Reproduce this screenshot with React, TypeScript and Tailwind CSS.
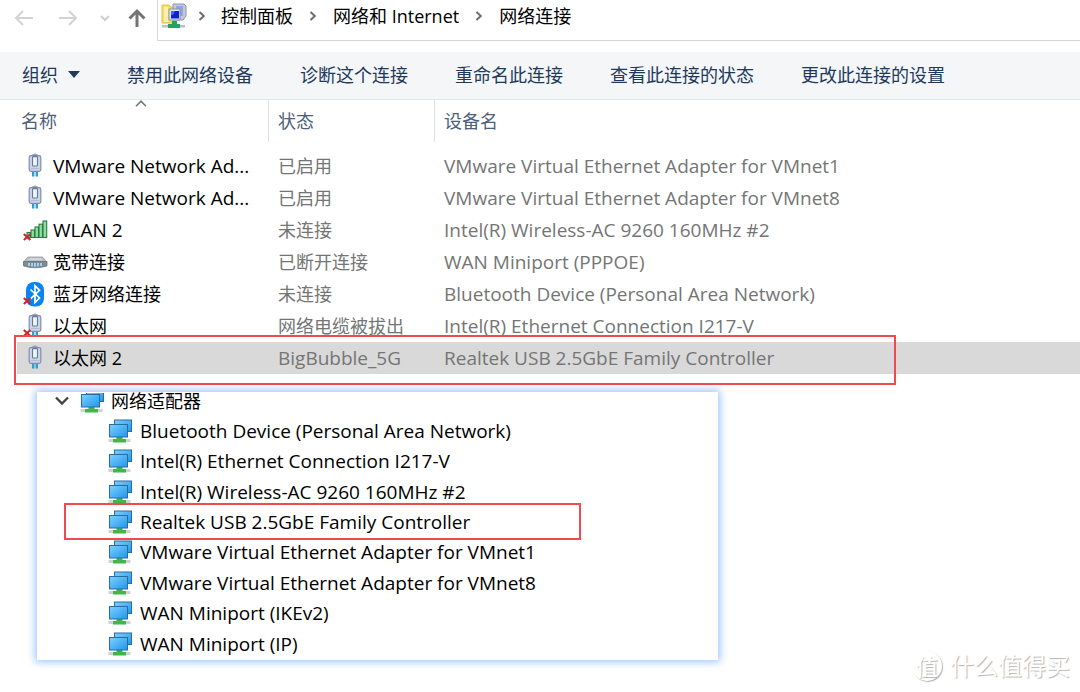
import { Fragment } from "react";
import type { ReactNode } from "react";

type IconKind = "plug" | "wifi" | "modem" | "bluetooth";

interface Connection {
  name: string;
  status: string;
  device: string;
  icon: IconKind;
  disconnected?: boolean;
  selected?: boolean;
}

const crumbs = ["控制面板", "网络和 Internet", "网络连接"];

const commands = ["禁用此网络设备", "诊断这个连接", "重命名此连接", "查看此连接的状态", "更改此连接的设置"];

const connections: Connection[] = [
  { name: "VMware Network Ad...", status: "已启用", device: "VMware Virtual Ethernet Adapter for VMnet1", icon: "plug" },
  { name: "VMware Network Ad...", status: "已启用", device: "VMware Virtual Ethernet Adapter for VMnet8", icon: "plug" },
  { name: "WLAN 2", status: "未连接", device: "Intel(R) Wireless-AC 9260 160MHz #2", icon: "wifi", disconnected: true },
  { name: "宽带连接", status: "已断开连接", device: "WAN Miniport (PPPOE)", icon: "modem" },
  { name: "蓝牙网络连接", status: "未连接", device: "Bluetooth Device (Personal Area Network)", icon: "bluetooth", disconnected: true },
  { name: "以太网", status: "网络电缆被拔出", device: "Intel(R) Ethernet Connection I217-V", icon: "plug", disconnected: true },
  { name: "以太网 2", status: "BigBubble_5G", device: "Realtek USB 2.5GbE Family Controller", icon: "plug", selected: true },
];

const adapters = [
  "Bluetooth Device (Personal Area Network)",
  "Intel(R) Ethernet Connection I217-V",
  "Intel(R) Wireless-AC 9260 160MHz #2",
  "Realtek USB 2.5GbE Family Controller",
  "VMware Virtual Ethernet Adapter for VMnet1",
  "VMware Virtual Ethernet Adapter for VMnet8",
  "WAN Miniport (IKEv2)",
  "WAN Miniport (IP)",
];

const highlighted = "Realtek USB 2.5GbE Family Controller";

// Latin labels run one size larger than the Chinese ones
const labelSize = (label: string) => (/^[A-Z]/.test(label) ? "text-[19px]" : "text-[18px]");

function Chevron({ className }: { className?: string }) {
  return (
    <svg viewBox="0 0 8 10" className={`w-2 h-2.5 shrink-0 ${className ?? ""}`} fill="none" stroke="#6e6e6e" strokeWidth="2">
      <path d="M1.5 1 L5.8 5 L1.5 9" />
    </svg>
  );
}

function Arrow({ d, color, width = 2 }: { d: string; color: string; width?: number }) {
  return (
    <svg viewBox="0 0 20 20" className="w-5 h-5" fill="none" stroke={color} strokeWidth={width}>
      <path d={d} />
    </svg>
  );
}

function FolderIcon() {
  return (
    <svg viewBox="0 0 26 26" className="w-[26px] h-[26px] shrink-0">
      <path d="M1 2 H8 L10 4 H13 V20 H1 Z" fill="#f6dc72" stroke="#e0bc48" />
      <path d="M3 4 H7 V19 H3 Z" fill="#fdf0a8" />
      <path d="M12 1 H23 L25 3 V13 L22 17 H12 Z" fill="#c3c9d6" stroke="#8f98ab" />
      <path d="M15 3 H22 V13 H15 Z" fill="#8ea5e8" />
      <path d="M8 6 H19 V17 H8 Z" fill="#dfe5f2" stroke="#8691b0" />
      <path d="M10 8 H18 V15.5 H10 Z" fill="#1120cf" />
      <path d="M10 8 H14 L12 12 H10 Z" fill="#4b68f2" />
      <path d="M1 22 H24 V24.5 H1 Z" fill="#b9c1c4" />
      <path d="M11 18 H16 V21 H19 V25 H7 V21 H11 Z" fill="#1fa562" />
    </svg>
  );
}

function PlugArt() {
  return (
    <g>
      <path d="M10.2 18 V23.5 M13.8 18 V23.5" stroke="#2b9fd4" strokeWidth="2.4" />
      <path d="M8.5 3 Q12 -0.5 15.5 3" fill="#dbe3ee" stroke="#96a3b8" strokeWidth="1.2" />
      <rect x="6.2" y="2.6" width="11.6" height="15.8" rx="1.8" fill="#cbd6e8" stroke="#8090aa" strokeWidth="1.2" />
      <rect x="9.5" y="3.6" width="5" height="9.4" rx="0.8" fill="#eef3fa" stroke="#6b7a94" strokeWidth="1.1" />
      <path d="M7.5 15.6 H16.5" stroke="#aebcd2" />
    </g>
  );
}

function WifiArt() {
  return (
    <g fill="#8fdc9c" stroke="#2d7a48" strokeWidth="1.1">
      <rect x="4" y="15.5" width="3.5" height="5" />
      <rect x="8" y="13" width="3.5" height="7.5" />
      <rect x="12" y="10" width="3.5" height="10.5" />
      <rect x="16" y="7.2" width="3.5" height="13.3" />
      <rect x="20" y="4" width="3.7" height="16.5" />
    </g>
  );
}

function ModemArt() {
  return (
    <g>
      <path d="M5 8 H19.5 L24 13 H0.5 Z" fill="#b9bfc5" stroke="#929aa2" strokeWidth="0.8" />
      <path d="M7 9.3 H18 L19.3 11 H5.5 Z" fill="#d5dade" />
      <path d="M0.5 12.5 H24 V17 Q12 20.5 0.5 17 Z" fill="#7f8b94" stroke="#68737d" strokeWidth="0.8" />
      <path d="M6 14 V17 M9 14 V17.5 M12 14 V17.7 M15 14 V17.5 M18 14 V17" stroke="#a5e0fa" strokeWidth="1.7" />
    </g>
  );
}

function BluetoothArt() {
  return (
    <g>
      <rect x="3" y="1" width="18" height="24.5" rx="8" fill="#0a84f0" />
      <path d="M7.5 8.5 L16.5 17 L12 21.5 V4.8 L16.5 9.2 L7.5 17.8" fill="none" stroke="#fff" strokeWidth="1.7" />
    </g>
  );
}

const iconArt: Record<IconKind, ReactNode> = {
  plug: <PlugArt />,
  wifi: <WifiArt />,
  modem: <ModemArt />,
  bluetooth: <BluetoothArt />,
};

function ConnectionIcon({ kind, disconnected }: { kind: IconKind; disconnected?: boolean }) {
  return (
    <svg viewBox="0 0 25 27" className="w-[25px] h-[27px] shrink-0">
      {iconArt[kind]}
      {disconnected && <path d="M0.8 17 L7.4 23 M7.4 17 L0.8 23" stroke="#c9262c" strokeWidth="2" />}
    </svg>
  );
}

function AdapterIcon() {
  return (
    <svg viewBox="0 0 24 24" className="w-6 h-6 shrink-0">
      <defs>
        <linearGradient id="screen" x1="0" y1="0" x2="1" y2="1">
          <stop offset="0" stopColor="#7fd0fd" />
          <stop offset="1" stopColor="#1d97ee" />
        </linearGradient>
      </defs>
      <path d="M0.5 20 H22.5 V23 H0.5 Z" fill="#d2d2d2" />
      <path d="M8.5 18 H14.5 V20 H18 V23.5 H5 V20 H8.5 Z" fill="#43b649" />
      <rect x="6.5" y="1" width="17" height="11.5" fill="url(#screen)" stroke="#2a6c9c" />
      <rect x="1.5" y="5.5" width="18" height="12.5" fill="url(#screen)" stroke="#2a6c9c" />
    </svg>
  );
}

function AddressRow() {
  return (
    <div className="flex h-13">
      <div className="flex w-[157px] h-9 shrink-0 items-center pl-3.5">
        <button aria-label="后退" className="mr-6"><Arrow color="#d3d3d3" d="M19 10 H2 M9 3 L2 10 L9 17" /></button>
        <button aria-label="前进" className="mr-5"><Arrow color="#d3d3d3" d="M1 10 H18 M11 3 L18 10 L11 17" /></button>
        <button aria-label="最近的位置" className="mr-[15px]">
          <svg viewBox="0 0 14 10" className="w-3.5 h-2.5" fill="none" stroke="#cfcfcf" strokeWidth="2"><path d="M3 3 L7 7 L11 3" /></svg>
        </button>
        <button aria-label="上移"><Arrow color="#757575" width={3} d="M10 19 V3 M2.5 10.5 L10 3 L17.5 10.5" /></button>
      </div>
      <nav className="flex flex-1 h-[41px] items-center border-l border-b border-[#d5d5d5] pl-[3px] pb-2 text-black">
        <FolderIcon />
        {crumbs.map((crumb, i) => (
          <Fragment key={crumb}>
            <Chevron className={i === 0 ? "ml-[11px] mr-[15px]" : "mx-4"} />
            <a href="#">{crumb}</a>
          </Fragment>
        ))}
      </nav>
    </div>
  );
}

function CommandBar() {
  return (
    <div className="flex h-12 items-center gap-[47px] border-b border-[#e5e7ea] bg-[#f4f6f8] pb-0.5 pl-[22px] text-[#1e395b]">
      <button className="flex items-center gap-2.5">
        组织
        <svg viewBox="0 0 12 7" className="w-3 h-[7px]" fill="#1e395b"><path d="M0 0 H12 L6 7 Z" /></svg>
      </button>
      {commands.map((command) => (
        <button key={command}>{command}</button>
      ))}
    </div>
  );
}

function ConnectionTable() {
  return (
    <div className="pl-[17px]">
      <table className="w-full table-fixed text-left">
        <thead className="text-[#4c607a]">
          <tr className="align-top">
            <th scope="col" className="w-[252px] pb-2 font-normal">
              <div className="relative flex h-[42px] items-center border-r border-[#e0e0e0] pl-1">
                名称
                <svg viewBox="0 0 12 7" className="absolute left-[118px] top-0 w-3 h-[7px]" fill="none" stroke="#777" strokeWidth="1.6"><path d="M1 6.2 L6 1.2 L11 6.2" /></svg>
              </div>
            </th>
            <th scope="col" className="w-[166px] pb-2 font-normal">
              <div className="flex h-[42px] items-center border-r border-[#e0e0e0] pl-[9px]">状态</div>
            </th>
            <th scope="col" className="pb-2 font-normal">
              <div className="flex h-[42px] items-center pl-[9px]">设备名</div>
            </th>
          </tr>
        </thead>
        <tbody className="whitespace-nowrap text-[#757575]">
          {connections.map((c, i) => (
            <tr key={i} className={c.selected ? "relative h-8 bg-[#d9d9d9]" : "h-8"}>
              <td className="text-black">
                <div className="flex h-8 items-center gap-[5px] pl-1.5">
                  <ConnectionIcon kind={c.icon} disconnected={c.disconnected} />
                  <span className={labelSize(c.name)}>{c.name}</span>
                </div>
                {c.selected && <div className="absolute -left-[3px] -top-[7px] h-[50px] w-[882px] border-2 border-[#ee4a50]" />}
              </td>
              <td className={`pl-[9px] ${labelSize(c.status)}`}>{c.status}</td>
              <td className={`pl-[9px] ${labelSize(c.device)}`}>{c.device}</td>
            </tr>
          ))}
        </tbody>
      </table>
    </div>
  );
}

function AdapterTree() {
  return (
    <section className="ml-[37px] mt-[18px] flow-root w-[681px] bg-white pb-px shadow-[0_0_8px_2px_#9cc6ff]">
      <ul className="-mt-[7px] grid h-[274px] grid-rows-9 text-black">
        <li className="flex items-center gap-[7px] pl-[18px] pt-px">
          <svg viewBox="0 0 14 10" className="mr-1 w-3.5 h-2.5" fill="none" stroke="#444" strokeWidth="2.4"><path d="M1 1.5 L7 7.5 L13 1.5" /></svg>
          {/* top of the icon is scrolled under the panel edge */}
          <span className="mt-1 flex h-5 items-end overflow-hidden">
            <AdapterIcon />
          </span>
          网络适配器
        </li>
        {adapters.map((adapter) => (
          <li key={adapter} className="relative flex items-center gap-2 pl-[71px] text-[19px]">
            <AdapterIcon />
            {adapter}
            {adapter === highlighted && <div className="absolute left-[27px] -top-1 h-[37px] w-[517px] border-2 border-[#ee4a50]" />}
          </li>
        ))}
      </ul>
    </section>
  );
}

function Watermark() {
  return (
    <div className="absolute bottom-2.5 right-2.5 flex items-center gap-2 text-2xl leading-8 text-white [text-shadow:1px_1px_1px_#b5b5b5]">
      <span className="flex h-[30px] w-[30px] items-center justify-center rounded-full text-[22px] font-medium shadow-[1px_1px_1px_#b5b5b5]">值</span>
      什么值得买
    </div>
  );
}

export default function App() {
  return (
    <main className="relative min-h-screen overflow-hidden bg-white font-['Open_Sans','Noto_Sans_CJK_SC',sans-serif] text-[18px] leading-6">
      <AddressRow />
      <CommandBar />
      <ConnectionTable />
      <AdapterTree />
      <Watermark />
    </main>
  );
}
